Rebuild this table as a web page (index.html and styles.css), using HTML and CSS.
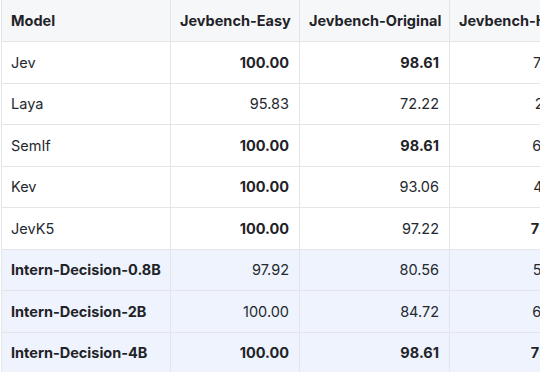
FILE: index.html
```html
<!DOCTYPE html>
<html>
<head>
<meta charset="utf-8">
<link rel="stylesheet" href="styles.css">
</head>
<body>
<table class="bench">
  <colgroup>
    <col class="c-model"><col class="c-easy"><col class="c-orig"><col class="c-hard">
  </colgroup>
  <thead>
    <tr><th>Model</th><th>Jevbench-Easy</th><th>Jevbench-Original</th><th>Jevbench-Hard</th></tr>
  </thead>
  <tbody>
    <tr><td class="left">Jev</td><td><b>100.00</b></td><td><b>98.61</b></td><td>72.92</td></tr>
    <tr><td class="left">Laya</td><td>95.83</td><td>72.22</td><td>27.08</td></tr>
    <tr><td class="left">SemIf</td><td><b>100.00</b></td><td><b>98.61</b></td><td>64.58</td></tr>
    <tr><td class="left">Kev</td><td><b>100.00</b></td><td>93.06</td><td>43.75</td></tr>
    <tr><td class="left">JevK5</td><td><b>100.00</b></td><td>97.22</td><td><b>75.00</b></td></tr>
    <tr class="ours"><td class="left"><b>Intern-Decision-0.8B</b></td><td>97.92</td><td>80.56</td><td>56.25</td></tr>
    <tr class="ours"><td class="left"><b>Intern-Decision-2B</b></td><td>100.00</td><td>84.72</td><td>62.50</td></tr>
    <tr class="ours"><td class="left"><b>Intern-Decision-4B</b></td><td><b>100.00</b></td><td><b>98.61</b></td><td><b>75.00</b></td></tr>
  </tbody>
</table>
</body>
</html>
```

FILE: styles.css
```css
html, body {
  margin: 0;
  padding: 0;
  background: #ffffff;
  overflow: hidden;
}
body {
  font-family: Inter, "Liberation Sans", sans-serif;
  font-size: 14.5px;
  color: #24292f;
}
.bench {
  border-collapse: collapse;
  table-layout: fixed;
  width: 581px;
  margin-left: 1px;
}
.c-model { width: 169px; }
.c-easy { width: 129px; }
.c-orig { width: 150px; }
.c-hard { width: 133px; }
.bench th, .bench td {
  border: 1px solid #e3e5e8;
  height: 41.5px;
  padding: 0 10px 0 9px;
  text-align: right;
  white-space: nowrap;
  box-sizing: border-box;
}
.bench th {
  background: #f6f7f9;
  font-weight: 700;
  color: #1f2328;
  text-align: left;
  border-top: none;
}
.bench .left { text-align: left; }
.bench b { font-weight: 700; color: #1f2328; }
.bench tr.ours td { background: #eef3fd; }
```
